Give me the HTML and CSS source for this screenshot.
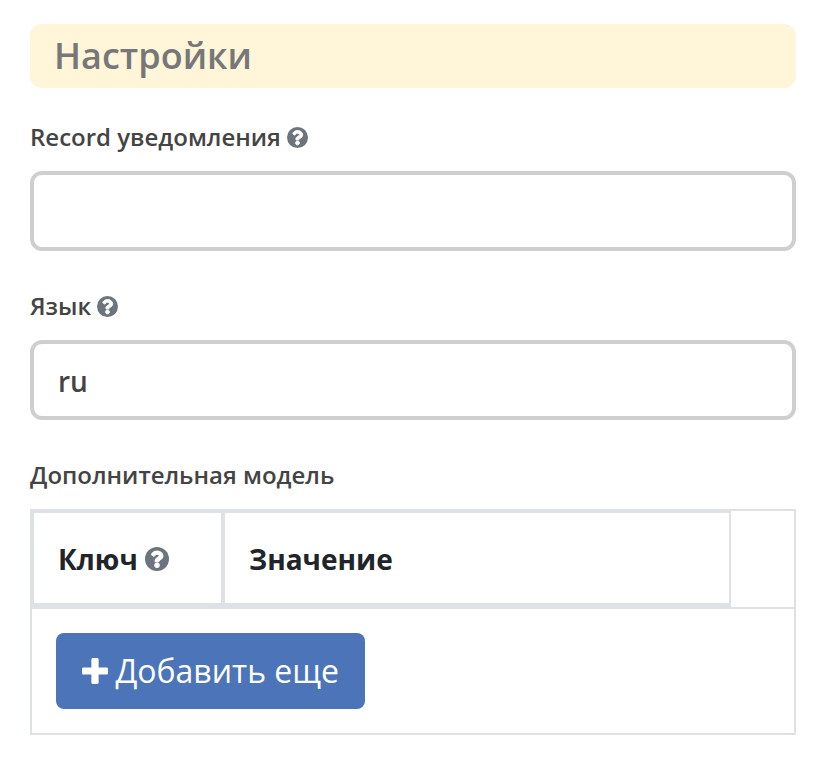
FILE: index.html
```html
<!DOCTYPE html>
<html lang="ru">
<head>
<meta charset="utf-8">
<title>Настройки</title>
<link rel="stylesheet" href="styles.css">
</head>
<body>
<svg width="0" height="0" class="sprite"><symbol id="help" viewBox="8 8 496 496"><circle cx="256" cy="256" r="248"/><path class="mark" d="M262.655 90c-54.497 0-89.255 22.957-116.549 63.758-3.536 5.286-2.353 12.415 2.715 16.258l34.699 26.310c5.205 3.947 12.621 3.008 16.665-2.122 17.864-22.658 30.113-35.797 57.303-35.797 20.429 0 45.698 13.148 45.698 32.958 0 14.976-12.363 22.667-32.534 33.976C247.128 238.528 216 254.941 216 296v4c0 6.627 5.373 12 12 12h56c6.627 0 12-5.373 12-12v-1.333c0-28.462 83.186-29.647 83.186-106.667 0-58.002-60.165-102-116.531-102zM256 338c-25.365 0-46 20.635-46 46 0 25.364 20.635 46 46 46s46-20.636 46-46c0-25.365-20.635-46-46-46z"/></symbol></svg>
<main class="form">
  <h1 class="title"><span>Настройки</span></h1>
  <div class="field">
    <label class="label" for="record"><span>Record уведомления</span><svg class="help"><use href="#help"/></svg></label>
    <input class="input" id="record" type="text">
  </div>
  <div class="field">
    <label class="label" for="lang"><span>Язык</span><svg class="help"><use href="#help"/></svg></label>
    <input class="input" id="lang" type="text" value="ru">
  </div>
  <div class="label"><span>Дополнительная модель</span></div>
  <div class="table">
    <div class="head">
      <div class="cell key"><span>Ключ</span><svg class="help"><use href="#help"/></svg></div>
      <div class="cell value"><span>Значение</span></div>
      <div class="cell actions"></div>
    </div>
    <div class="foot">
      <button class="add" type="button"><svg class="plus" viewBox="0 32 448 448"><path d="M448 294.2v-76.400c0-13.300-10.700-24-24-24H286.200V56c0-13.300-10.700-24-24-24h-76.400c-13.300 0-24 10.700-24 24v137.800H24c-13.300 0-24 10.700-24 24v76.400c0 13.300 10.700 24 24 24h137.800V456c0 13.300 10.700 24 24 24h76.400c13.300 0 24-10.700 24-24V318.200H424c13.300 0 24-10.700 24-24z"/></svg><span>Добавить еще</span></button>
    </div>
  </div>
</main>
</body>
</html>
```
FILE: styles.css
```css
* { box-sizing: border-box; }
body { margin: 0; background: #fff; font-family: "Open Sans", "Noto Sans", sans-serif; color: #444; }
.sprite { display: block; }
.form { width: 766px; margin: 24px 0 0 30px; }
.title { margin: 0 0 31px; height: 64px; padding-left: 24px; border-radius: 12px; background: #fff5d9; color: #777; font-size: 36px; font-weight: 600; line-height: 64px; }
.field { margin-bottom: 37px; }
.label { display: flex; align-items: center; height: 36px; margin-bottom: 16px; font-size: 24px; font-weight: 600; line-height: 36px; color: #444; white-space: nowrap; }
.help { width: 21px; height: 21px; margin-left: 6px; fill: #6c757d; }
.mark { fill: #fff; stroke: #fff; stroke-width: 22px; }
.input { display: block; width: 100%; height: 80px; padding: 2px 24px 0; border: 4px solid #cfcfcf; border-radius: 12px; background: #fff; color: #444; font: 600 28px "Open Sans", "Noto Sans", sans-serif; outline: 0; }
.table { border: 2px solid #dee2e6; border-top: 0; height: 226px; }
.head { display: grid; grid-template-columns: 191px 508px 63px; height: 100px; color: #212529; font-size: 28px; font-weight: 700; }
.cell { display: flex; align-items: center; border: 0 solid #dee2e6; }
.key { border-width: 4px 2px 6px 2px; padding: 2px 0 0 24px; }
.value { border-width: 4px 2px 6px 2px; padding: 2px 0 0 24px; }
.actions { border-width: 2px 0; }
.cell .help { width: 24px; height: 24px; margin-left: 7px; }
.foot { padding: 24px; }
.add { display: flex; align-items: center; width: 309px; height: 76px; padding: 0 0 1px 26px; border: 0; border-radius: 8px; background: #4b75b8; color: #fff; font: 400 32px "Open Sans", "Noto Sans", sans-serif; white-space: nowrap; }
.plus { width: 26px; height: 26px; margin-right: 7.4px; fill: #fff; }
```
